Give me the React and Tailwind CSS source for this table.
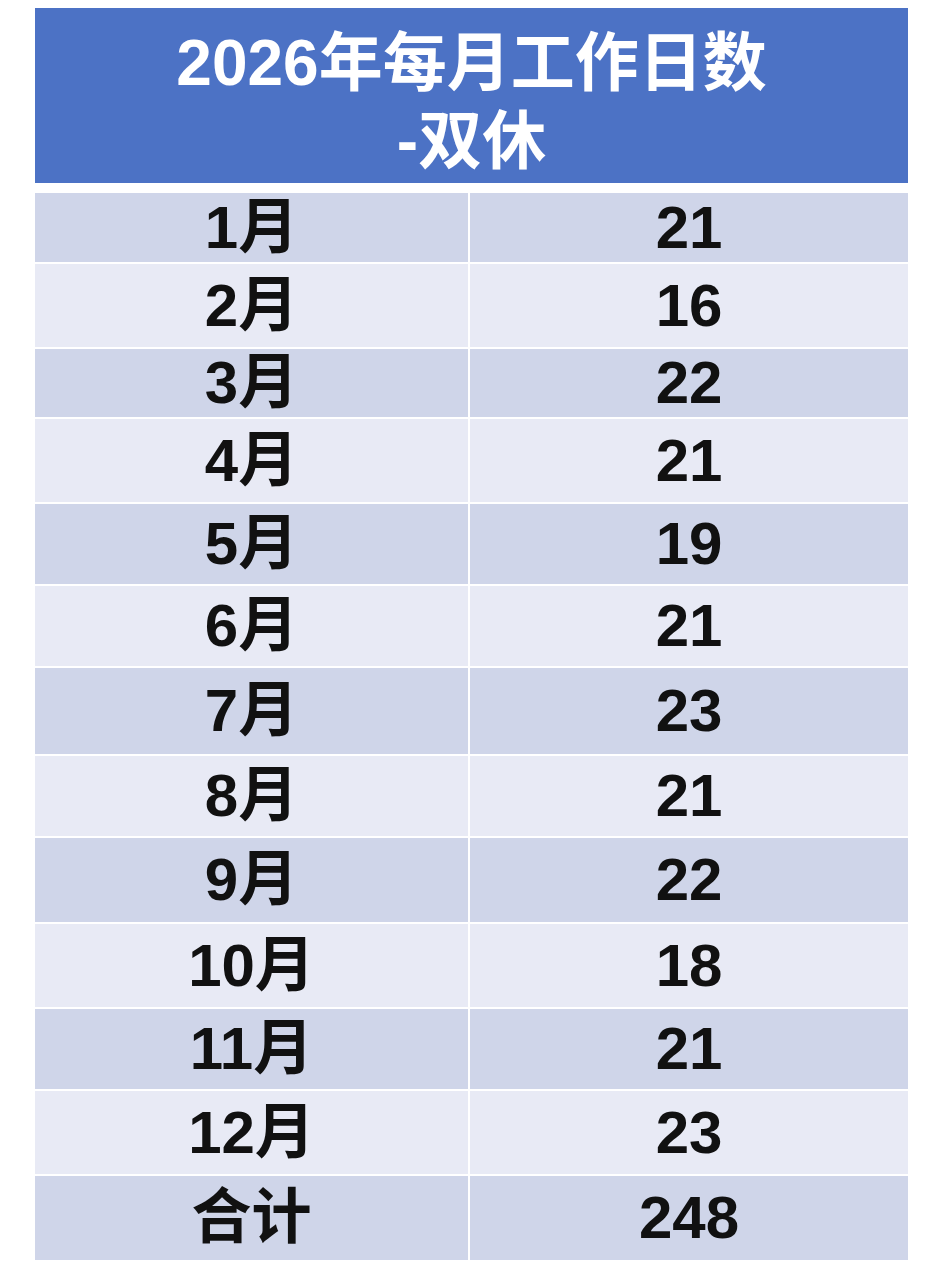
import React from "react";

const rows = [
  { m: "1月", d: "21", h: "h-[69px]", bg: "bg-[#cfd5e9]" },
  { m: "2月", d: "16", h: "h-[83px]", bg: "bg-[#e8eaf5]" },
  { m: "3月", d: "22", h: "h-[68px]", bg: "bg-[#cfd5e9]" },
  { m: "4月", d: "21", h: "h-[83px]", bg: "bg-[#e8eaf5]" },
  { m: "5月", d: "19", h: "h-[80px]", bg: "bg-[#cfd5e9]" },
  { m: "6月", d: "21", h: "h-[80px]", bg: "bg-[#e8eaf5]" },
  { m: "7月", d: "23", h: "h-[86px]", bg: "bg-[#cfd5e9]" },
  { m: "8月", d: "21", h: "h-[80px]", bg: "bg-[#e8eaf5]" },
  { m: "9月", d: "22", h: "h-[84px]", bg: "bg-[#cfd5e9]" },
  { m: "10月", d: "18", h: "h-[83px]", bg: "bg-[#e8eaf5]" },
  { m: "11月", d: "21", h: "h-[80px]", bg: "bg-[#cfd5e9]" },
  { m: "12月", d: "23", h: "h-[83px]", bg: "bg-[#e8eaf5]" },
  { m: "合计", d: "248", h: "h-[84px]", bg: "bg-[#cfd5e9]" },
];

const font = { fontFamily: '"Liberation Sans", "Noto Sans CJK SC", sans-serif' };

export default function App() {
  return (
    <div className="w-[946px] h-[1280px] bg-white pt-2 px-[35px] box-border" style={font}>
      <div className="w-[873px]">
        {/* header */}
        <div className="h-[175px] bg-[#4c72c5] flex flex-col items-center justify-center text-white font-bold text-[64px] leading-[78px] pt-3">
          <div>2026年每月工作日数</div>
          <div>-双休</div>
        </div>

        {/* body */}
        <div className="mt-[10px] flex flex-col gap-[2px]">
          {rows.map((r) => (
            <div key={r.m} className={`grid grid-cols-[433px_438px] gap-[2px] shrink-0 overflow-hidden ${r.h}`}>
              <div className={`${r.bg} flex items-center justify-center text-[60px] leading-none font-bold text-[#111]`}>
                {r.m}
              </div>
              <div className={`${r.bg} flex items-center justify-center text-[60px] leading-none font-bold text-[#111]`}>
                {r.d}
              </div>
            </div>
          ))}
        </div>
      </div>
    </div>
  );
}
